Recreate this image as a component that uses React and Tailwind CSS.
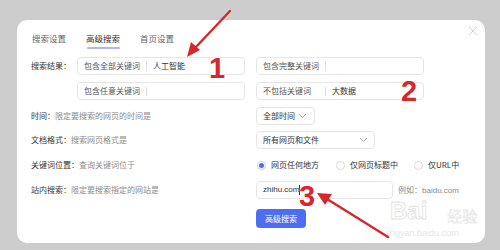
import React from "react";

const cjk = { fontFamily: '"Noto Sans CJK SC", "Liberation Sans", sans-serif' };
const latin = { fontFamily: '"Liberation Sans", sans-serif' };

function Field({ prefix, value }) {
  return (
    <div className="flex items-center w-[168px] shrink-0 h-[18px] border border-[#e6e6e6] rounded-[4px] px-[6px] text-[8px] text-[#555]">
      <span className="w-[62px] shrink-0 leading-none">{prefix}</span>
      <span className="w-px h-[9px] bg-[#dcdcdc]" />
      <span className="pl-[6px] text-[#333] leading-none">{value}</span>
    </div>
  );
}

function Chevron() {
  return (
    <svg width="9" height="6" viewBox="0 0 9 6" fill="none">
      <path d="M1 1l3.5 3.5L8 1" stroke="#9a9a9a" strokeWidth="0.9" />
    </svg>
  );
}

function Radio({ checked, label, className = "" }) {
  return (
    <div className={`flex items-center ${className}`}>
      <span
        className={`w-[9px] h-[9px] rounded-full border flex items-center justify-center ${
          checked ? "border-[#c7d0f5]" : "border-[#dadada]"
        }`}
      >
        {checked && <span className="w-[5px] h-[5px] rounded-full bg-[#4e6ef2]" />}
      </span>
      <span className="ml-[5px] text-[8px] text-[#333] leading-none">{label}</span>
    </div>
  );
}

function Row({ label, desc, children, className = "" }) {
  return (
    <div className={`flex items-center h-[18px] ${className}`}>
      <div className="w-[225px] shrink-0 text-[8px] leading-none">
        <span className="text-[#333]">{label}：</span>
        <span className="text-[#8a8a8a]">{desc}</span>
      </div>
      {children}
    </div>
  );
}

export default function App() {
  return (
    <div className="relative w-[500px] h-[250px] bg-[#cdcdcd] pt-[20px] pl-[17px] overflow-hidden" style={cjk}>
      <div className="relative w-[468px] h-[223px] bg-white rounded-[10px] pl-[14px] pt-[12px]">
        {/* close */}
        <svg className="absolute right-[7px] top-[6px]" width="10" height="10" viewBox="0 0 10 10">
          <path d="M1 1l8 8M9 1L1 9" stroke="#cfcfcf" strokeWidth="0.9" />
        </svg>

        {/* tabs */}
        <div className="flex gap-[20px] pl-[1px] text-[8.5px] leading-[12px]">
          <div className="text-[#666]">搜索设置</div>
          <div className="flex flex-col items-center">
            <span className="text-[#333]">高级搜索</span>
            <span className="mt-[3px] w-[33px] h-[2px] rounded-full bg-[#aeb8ea]" />
          </div>
          <div className="text-[#666]">首页设置</div>
        </div>

        {/* search result fields */}
        <div className="flex mt-[8px]">
          <div className="w-[46px] shrink-0 h-[18px] flex items-center text-[8px] text-[#333] leading-none whitespace-nowrap">
            搜索结果：
          </div>
          <div className="flex flex-col gap-[7px]">
            <div className="flex gap-[11px]">
              <Field prefix="包含全部关键词" value="人工智能" />
              <Field prefix="包含完整关键词" value="" />
            </div>
            <div className="flex gap-[11px]">
              <Field prefix="包含任意关键词" value="" />
              <Field prefix="不包括关键词" value="大数据" />
            </div>
          </div>
        </div>

        <Row label="时间" desc="限定要搜索的网页的时间是" className="mt-[7px]">
          <div className="flex items-center justify-between w-[59px] h-[18px] border border-[#e6e6e6] rounded-[4px] pl-[6px] pr-[7px] text-[8px] text-[#333]">
            <span className="leading-none">全部时间</span>
            <Chevron />
          </div>
        </Row>

        <Row label="文档格式" desc="搜索网页格式是" className="mt-[6px]">
          <div className="flex items-center justify-between w-[119px] h-[18px] border border-[#e6e6e6] rounded-[4px] pl-[6px] pr-[6px] text-[8px] text-[#333]">
            <span className="leading-none">所有网页和文件</span>
            <Chevron />
          </div>
        </Row>

        <Row label="关键词位置" desc="查询关键词位于" className="mt-[7px]">
          <div className="flex items-center pl-[1px]">
            <Radio checked label="网页任何地方" />
            <Radio label="仅网页标题中" className="ml-[17px]" />
            <Radio label="仅URL中" className="ml-[16px]" />
          </div>
        </Row>

        <Row label="站内搜索" desc="限定要搜索指定的网站是" className="mt-[7px]">
          <div className="flex items-center w-[137px] h-[18px] border border-[#e6e6e6] rounded-[4px] px-[6px] text-[8px] text-[#333]">
            <span className="leading-none" style={latin}>zhihu.com</span>
            <span className="w-px h-[10px] bg-[#333]" />
          </div>
          <span className="ml-[5px] text-[8px] text-[#8a8a8a] leading-none">
            例如：<span style={latin}>baidu.com</span>
          </span>
        </Row>

        <div className="flex pl-[225px] mt-[10px]">
          <button className="w-[50px] h-[19px] rounded-[4px] bg-[#4e6ef2] text-white text-[8px] leading-none">
            高级搜索
          </button>
        </div>
      </div>

      {/* watermark */}
      <div className="absolute left-[390px] top-[199px] flex items-end pointer-events-none">
        <span
          className="text-[24px] leading-none font-bold"
          style={{ ...latin, WebkitTextStroke: "0.8px #e2e2e2", color: "transparent" }}
        >
          Bai
        </span>
        <span
          className="text-[15px] leading-none ml-[20px]"
          style={{ WebkitTextStroke: "0.5px #e2e2e2", color: "transparent" }}
        >
          经验
        </span>
      </div>
      <div className="absolute left-[386px] top-[229px] text-[9px] text-[#e6e6e6] leading-none pointer-events-none" style={latin}>
        jingyan.baidu.com
      </div>

      {/* annotations */}
      <svg className="absolute left-0 top-0 pointer-events-none" width="500" height="250" viewBox="0 0 500 250">
        <path d="M230 11 L195 48" stroke="#d8262c" strokeWidth="2.4" strokeLinecap="round" />
        <path d="M187 57 L191 42 L200 50 Z" fill="#d8262c" />
        <path d="M388 237 L327 199" stroke="#d8262c" strokeWidth="2.4" strokeLinecap="round" />
        <path d="M317 193 L332 194 L325 205 Z" fill="#d8262c" />
      </svg>
      {[
        ["1", "left-[209px] top-[51px]"],
        ["2", "left-[401px] top-[74px]"],
        ["3", "left-[299px] top-[179px]"],
      ].map(([n, pos]) => (
        <span
          key={n}
          className={`absolute ${pos} text-[29px] leading-[34px] font-bold text-[#d8262c]`}
          style={{ ...latin, textShadow: "0 0 2px #fff, 0 0 2px #fff" }}
        >
          {n}
        </span>
      ))}
    </div>
  );
}
